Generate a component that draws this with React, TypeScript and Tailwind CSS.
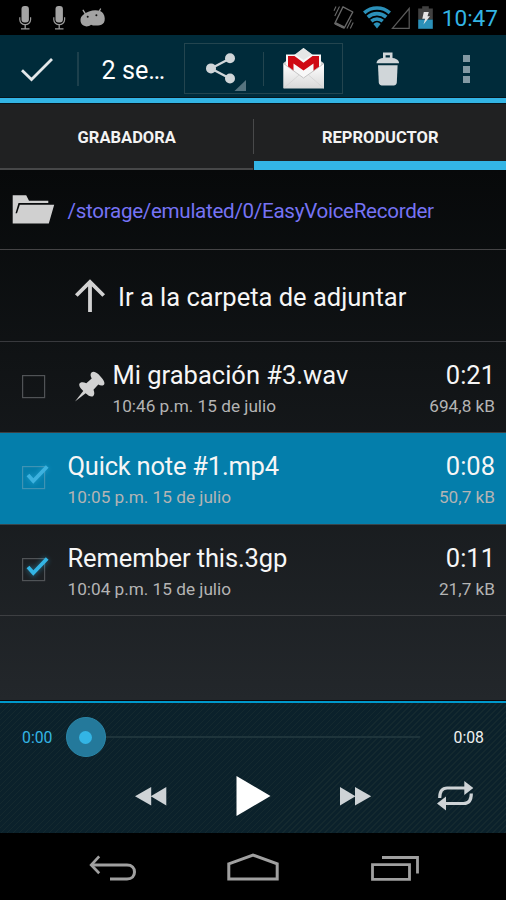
import React from 'react';
import clsx from 'clsx';

type Recording = {
    name: string;
    nameClass?: string;
    date: string;
    length: string;
    size: string;
    checked: boolean;
    playing: boolean;
    pinned: boolean;
};

const recordings: Recording[] = [
    { name: 'Mi grabación #3.wav', date: '10:46 p.m. 15 de julio', length: '0:21', size: '694,8 kB', checked: false, playing: false, pinned: true },
    { name: 'Quick note #1.mp4', nameClass: 'tracking-[-0.22px]', date: '10:05 p.m. 15 de julio', length: '0:08', size: '50,7 kB', checked: true, playing: true, pinned: false },
    { name: 'Remember this.3gp', nameClass: 'tracking-[-0.12px]', date: '10:04 p.m. 15 de julio', length: '0:11', size: '21,7 kB', checked: true, playing: false, pinned: false },
];

function MicIcon() {
    return (
        <svg width="14" height="25" viewBox="18 5 14 25" fill="none" stroke="#9a9a9a">
            <rect x="21.5" y="6" width="7.4" height="16.5" rx="3" fill="#a3a3a3" stroke="none" />
            <path d="M19.8 17.3v2.5a5.4 4.8 0 0 0 10.8 0v-2.5" strokeWidth="1.2" />
            <path d="M25.2 24.5v4M21 28.8h8.5" strokeWidth="1.3" />
        </svg>
    );
}

function AndroidIcon() {
    return (
        <svg width="26" height="20" viewBox="80 8 26 20">
            <path d="M83.2 10.3l2.500 4M100.500 9l-2 3.500" stroke="#a3a3a3" strokeWidth="1.4" strokeLinecap="round" />
            <path d="M80.500 19.500c.3-3.500 3.600-6.400 8.500-8.100 6-1.900 12-1.200 14.200 2 1.900 2.900 2 6.800.8 9-1.400 2.400-4.300 3.300-7 3-2.200.3-4 .2-6-.7-1.800 1.700-5.200 2.300-7.500.9-2.300-1.400-3.200-3.800-3-6.100z" fill="#a3a3a3" />
            <circle cx="87.700" cy="16.800" r="1" fill="#111" />
            <circle cx="96.400" cy="15.300" r="1" fill="#111" />
        </svg>
    );
}

function StatusBar() {
    return (
        <div className="flex h-[35px] items-start bg-black pt-[5px]">
            <div className="ml-[18px]"><MicIcon /></div>
            <div className="ml-5"><MicIcon /></div>
            <div className="mt-[3px] ml-[14px]"><AndroidIcon /></div>
            <svg className="ml-auto" width="22" height="25" viewBox="333 5 22 25" fill="none" stroke="#686868">
                <path d="M343 6.800l9.800 5.200-8.600 16-9.400-4.500z" strokeWidth="1.400" strokeLinejoin="round" />
                <path d="M334 10.700l2-4.200M334.800 16l4.700-9.500M346.900 28.500l4.500-9M350.300 28.500l2.900-6" strokeWidth="1.100" />
                <path d="M335.500 23.300l8.300 4" strokeWidth="2.600" />
            </svg>
            <svg className="ml-[8px]" width="28" height="25" viewBox="363 5 28 25" fill="none" stroke="#2b90b9" strokeWidth="3.600">
                <path d="M364.200 12.800a19.500 19.500 0 0 1 25.600 0" />
                <path d="M367.800 17.100a14 14 0 0 1 18.400 0" />
                <path d="M371.300 21.200a8.700 8.700 0 0 1 11.400 0" />
                <path d="M377 28.400l-3.600-4.500a5.500 5.500 0 0 1 7.200 0z" fill="#2b90b9" stroke="none" />
            </svg>
            <svg width="19" height="25" viewBox="390 5 19 25" fill="none" stroke="#5b5b5b" strokeWidth="1.200">
                <path d="M391.400 28.300h16.800V8.500z" />
            </svg>
            <svg className="ml-2" width="15" height="25" viewBox="417 5 15 25">
                <path d="M417.200 8.500h4V6.300h6.600v2.200h4V19.500h-14.600z" fill="#414141" />
                <path d="M417.200 19.500h14.600v9.300h-14.600z" fill="#2b90b9" />
                <path d="M422.800 12h5l-1.300 4.300h2.500l-6.500 8.200 1.600-5.800h-2.800z" fill="#e5e5e5" />
            </svg>
            <span className="mt-[1px] mr-[8px] ml-[9px] w-[56.500px] text-right text-[22.600px] leading-[25px] text-[#33b5e5]">10:47</span>
        </div>
    );
}

function ActionBar() {
    return (
        <div className="flex h-[62px] items-center bg-[#002b3a] pt-[6px]">
            <svg className="ml-5" width="34" height="26" viewBox="20 56 34 26" fill="none" stroke="#e3e8ea" strokeWidth="2.800">
                <path d="M22 70.200l9.500 9.300L52 59" />
            </svg>
            <div className="ml-[23px] h-[34px] w-[2px] bg-[#1c404c]" />
            <span className="mt-[4px] ml-[22.500px] text-[25.200px] text-white">2 se…</span>
            <div className="-mt-px ml-auto flex h-[51px] w-[159px] items-center border border-[#23454f]">
                <svg width="78" height="49" viewBox="185 44 78 49">
                    <path d="M230 58.500l-19 10 19 10" stroke="#d0d6d9" strokeWidth="2.300" fill="none" />
                    <circle cx="230" cy="58.300" r="5" fill="#d0d6d9" />
                    <circle cx="211" cy="68.400" r="5" fill="#d0d6d9" />
                    <circle cx="230" cy="78.500" r="5" fill="#d0d6d9" />
                    <path d="M246 80v11h-11.500z" fill="#567480" />
                </svg>
                <div className="h-[34px] w-px bg-[#23454f]" />
                <svg width="78" height="49" viewBox="264 44 78 49">
                    <defs>
                        <linearGradient id="envelope" x1="0" y1="0" x2="0" y2="1">
                            <stop offset="0" stopColor="#fff" />
                            <stop offset="1" stopColor="#d8d8d8" />
                        </linearGradient>
                    </defs>
                    <path d="M283.500 63l20-15 20 15v25h-40z" fill="#d5d5d5" />
                    <path d="M286 54.500h35V80h-35z" fill="#f8f8f8" />
                    <path d="M295.500 54.500l8-6.500 8.500 6.500-8.500 5.500z" fill="#e6e6e6" />
                    <path d="M288 74V56h6.500l9 6.800 9-6.800h6.500v18h-5.500V63.500l-10 7-10-7V74z" fill="#cf0a14" />
                    <path d="M283.500 63.500L303.500 78l20.500-14.500V88.500h-40.500z" fill="url(#envelope)" />
                    <path d="M284 88l15-13M323.500 88l-15-13" stroke="#d0d0d0" strokeWidth=".7" />
                    <path d="M283.500 63.500l20 14.500L324 63.500" stroke="#b9b9b9" fill="none" strokeWidth=".8" />
                </svg>
            </div>
            <svg className="ml-[33px]" width="24" height="36" viewBox="376 51 24 36" fill="#d0d6d9">
                <path d="M383 58v-5.500h9.500V58h-2.600v-2.800h-4.300V58z" />
                <path d="M376.500 63.200c0-3.600 4.500-5.700 11.300-5.700s11.300 2.100 11.300 5.700z" />
                <path d="M378 65.200h19.600l-.8 17.500c-.2 2-2 2.800-4.500 2.800h-9c-2.500 0-4.300-.8-4.500-2.800z" />
            </svg>
            <div className="mr-[36px] ml-[63px] flex flex-col gap-[3.500px]">
                <div className="size-[7px] bg-[#8399a3]" />
                <div className="size-[7px] bg-[#8399a3]" />
                <div className="size-[7px] bg-[#8399a3]" />
            </div>
        </div>
    );
}

function Tabs() {
    return (
        <div className="flex h-[66px] bg-[#202122] text-[16.500px] font-bold text-[#f3f3f3]">
            <div className="flex flex-1 items-center justify-center border-b-2 border-[#464748] pt-[4px] pl-px">GRABADORA</div>
            <div className="mt-[15px] h-[35px] w-px bg-[#48494a]" />
            <div className="flex flex-1 items-center justify-center border-b-[9px] border-[#33b5e5] pt-[11px] pl-px">REPRODUCTOR</div>
        </div>
    );
}

function Checkbox({ checked, playing }: { checked: boolean; playing: boolean }) {
    return (
        <svg className="ml-[18px] shrink-0" width="36" height="36" viewBox="18 550 36 36" fill="none">
            <rect x="22.600" y="558.600" width="22" height="22" stroke={playing ? '#3f93b3' : '#505356'} strokeWidth="1.200" />
            {checked && (
                <>
                    <path d="M28 567l5.300 6L47.200 558.500" stroke="#33b5e5" strokeWidth="7" opacity=".28" className="blur-[2px]" />
                    <path d="M28 567l5.300 6L47.200 558.500" stroke={playing ? '#3db2df' : '#33b5e5'} strokeWidth="3.800" />
                </>
            )}
        </svg>
    );
}

function PinIcon() {
    return (
        <svg width="32" height="32" viewBox="74 370 32 32" fill="#d2d2d2">
            <path d="M75 401.500l9-11.500 2.600 2.500z" />
            <path d="M91.500 372.500c1.600-1.500 4.200-.8 7 1.700l3.500 4c2.200 2.900 3.300 5.300 1.700 6.700-1.700 1.300-3.700.6-5.400-.3l-4.800 5.200c1.100 2.700 1.200 5.200-.5 6.500-1.900 1-4.600-.4-7.400-3l-3.300-3.200c-2.400-2.700-3.800-5-2.800-6.600 1.500-1.700 4-1.500 6.800-.3l5.400-4.800c-1.200-2-1.700-4.400-.2-5.900z" />
        </svg>
    );
}

function RecordingRow({ item }: { item: Recording }) {
    return (
        <div className={clsx('flex h-[91.500px] items-start border-b', item.playing ? 'border-[#38454c] bg-[#047eab]' : 'border-[#3d3f42]')}>
            <div className="mt-[25px]"><Checkbox checked={item.checked} playing={item.playing} /></div>
            {item.pinned && <div className="mt-[28px] ml-5"><PinIcon /></div>}
            <div className={clsx('flex flex-1 flex-col pt-[17px]', item.pinned ? 'ml-[6.500px]' : 'ml-[13.500px]')}>
                <span className={clsx('text-[25.500px] leading-[32px] text-[#f6f6f6]', item.nameClass)}>{item.name}</span>
                <span className="mt-[5px] text-[17.200px] leading-[20px] text-[#b4b4b4]">{item.date}</span>
            </div>
            <div className="flex flex-col items-end pt-[17px] pr-[11px]">
                <span className="text-[25.500px] leading-[32px] text-[#f6f6f6]">{item.length}</span>
                <span className="mt-[5px] text-[17.200px] leading-[20px] text-[#b4b4b4]">{item.size}</span>
            </div>
        </div>
    );
}

function Player() {
    return (
        <div className="flex h-[132px] flex-col border-t-2 border-[#0099cc] bg-[#0b212b] bg-[repeating-linear-gradient(135deg,transparent_0px,transparent_3px,#14292f_3px,#14292f_4.240px)]">
            <div className="mt-[14px] flex h-[40px] items-center text-[15.800px]">
                <span className="w-[65.500px] pt-[2px] pl-[22px] text-[#33b5e5]">0:00</span>
                <div className="flex size-10 items-center justify-center rounded-full border border-[#2a86a8] bg-[#24799b]">
                    <div className="size-[13px] rounded-full bg-[#33b5e5]" />
                </div>
                <div className="h-[2px] w-[314px] bg-[#1e343b]" />
                <span className="ml-auto pt-[2px] pr-[22px] text-[#f0f0f0]">0:08</span>
            </div>
            <div className="mt-[16px] flex h-[46px] items-center">
                <svg className="ml-[134px]" width="34" height="20" viewBox="134 786 34 20" fill="#ced3d6">
                    <path d="M151.200 787v18.500L135 796.300zM166.300 787v18.500l-15.500-9.200z" />
                </svg>
                <svg className="ml-[67px]" width="36" height="42" viewBox="235 775 36 42" fill="#fff">
                    <path d="M236.500 776v40l34-20z" />
                </svg>
                <svg className="ml-[68px]" width="34" height="20" viewBox="339 786 34 20" fill="#ced3d6">
                    <path d="M340 787v18.500l15.500-9.200zM355 787v18.500l16.200-9.200z" />
                </svg>
                <svg className="ml-[64px]" width="38" height="32" viewBox="437 780 38 32" fill="none" stroke="#ced3d6" strokeWidth="3.200">
                    <path d="M439.700 798c0-6 2.500-10 7.500-10H466M471.300 793.500c0 6-2.500 10-7.500 10H445" />
                    <path d="M464.300 781v14l9-7zM446 796.500v14l-9-7z" fill="#ced3d6" stroke="none" />
                </svg>
            </div>
        </div>
    );
}

function NavBar() {
    return (
        <div className="flex h-[67px] items-center bg-black pt-[3px]">
            <svg className="ml-[87.500px]" width="50" height="30" viewBox="88 853 50 30" fill="none" stroke="#a0a0a0" strokeWidth="3">
                <path d="M91 865h36c5 0 7.500 3 7.500 7s-2.500 7-7.500 7h-17" />
                <path d="M99.200 856.300l-8 8.700 8 8.300" strokeWidth="2.700" />
            </svg>
            <svg className="ml-[88.500px]" width="54" height="30" viewBox="226 853 54 30" fill="none" stroke="#a0a0a0" strokeWidth="3">
                <path d="M228.800 863.800L253 855l24.200 8.800v15.200h-48.400z" />
            </svg>
            <svg className="ml-[90px]" width="50" height="30" viewBox="370 853 50 30" fill="none" stroke="#a0a0a0" strokeWidth="2.800">
                <path d="M372.500 864.600h37v14.700h-37zM382 857.500h35.500v16" />
            </svg>
        </div>
    );
}

export default function App() {
    return (
        <div className="flex h-[900px] w-[506px] flex-col overflow-hidden bg-black font-[Roboto,sans-serif] whitespace-nowrap">
            <StatusBar />
            <ActionBar />
            <div className="h-[7px] border-y border-[#06161d] bg-[#33b5e5]" />
            <Tabs />
            <div className="flex h-[531px] flex-col border-b border-[#0c0508] bg-linear-to-b from-[#07090a] to-[#23272b]">
                <div className="flex h-[80px] items-center border-b border-[#454446]">
                    <svg className="-mt-px ml-3" width="43" height="30" viewBox="12 194 43 30" fill="#d0d0d0">
                        <path d="M12.700 195.200h13.500l2.800 5.500h19.300v2.300H18.500l-3 10.300h1.500l2.800-8.600h34.400l-5.400 18.800H12.700z" />
                    </svg>
                    <span className="mt-[3px] ml-[12.500px] text-[20.600px] tracking-[-0.3px] text-[#7673f5]">/storage/emulated/0/EasyVoiceRecorder</span>
                </div>
                <div className="flex h-[91.500px] items-center border-b border-[#38393d]">
                    <svg className="mt-[2px] ml-[74px]" width="32" height="34" viewBox="74 279 32 34" fill="none" stroke="#d2d2d2" strokeWidth="3.800">
                        <path d="M90 312v-29M76.300 295.500L90 282l13.700 13.500" />
                    </svg>
                    <span className="mt-[3px] ml-[12px] text-[25.500px] text-[#f6f6f6]">Ir a la carpeta de adjuntar</span>
                </div>
                {recordings.map((item) => (
                    <RecordingRow key={item.name} item={item} />
                ))}
            </div>
            <Player />
            <NavBar />
        </div>
    );
}
